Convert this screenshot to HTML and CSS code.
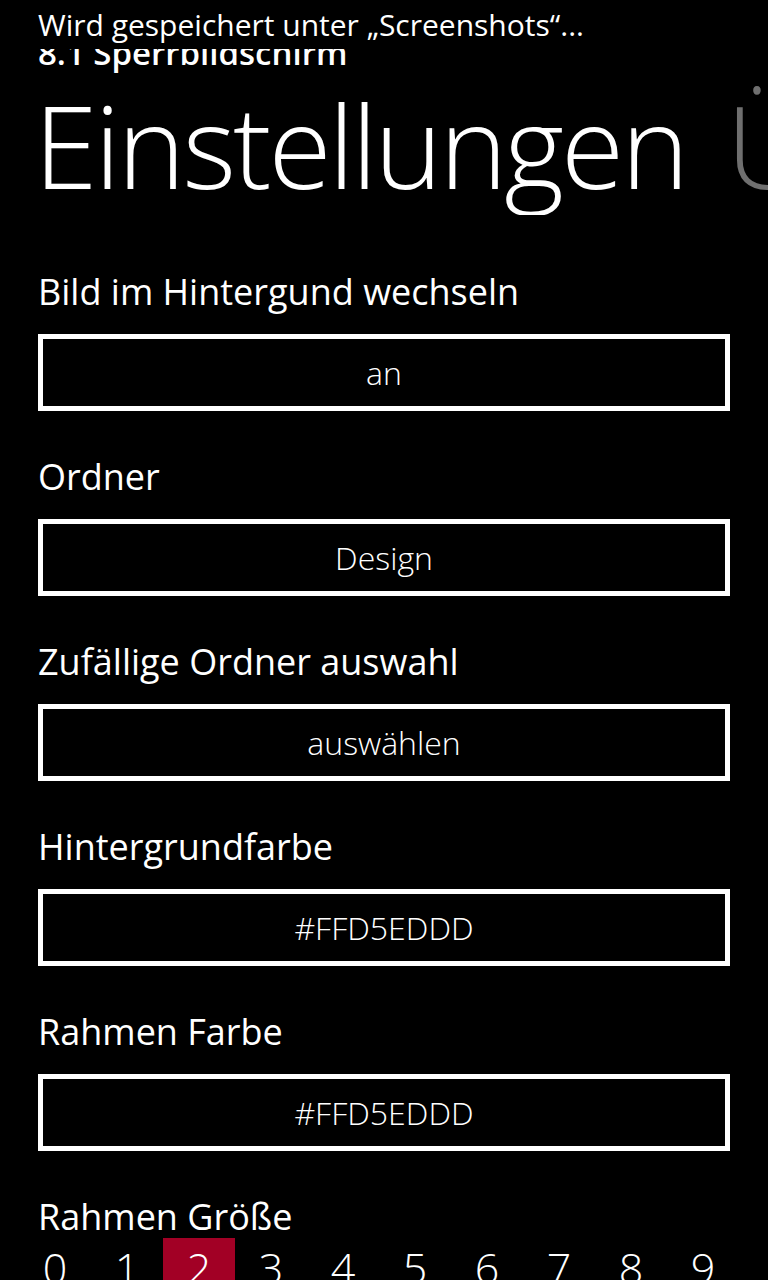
FILE: index.html
```html
<!DOCTYPE html>
<html lang="de">
<head>
<meta charset="utf-8">
<title>8.1 Sperrbildschirm</title>
<link rel="stylesheet" href="styles.css">
</head>
<body>
<div class="phone">
  <div class="status">Wird gespeichert unter „Screenshots“...</div>
  <div class="app-title">8.1 Sperrbildschirm</div>
  <div class="pivot">
    <span class="pivot-item active">Einstellungen</span>
    <span class="pivot-item">Über</span>
  </div>
  <div class="settings">
    <div class="setting">
      <div class="label">Bild im Hintergund wechseln</div>
      <div class="button">an</div>
    </div>
    <div class="setting">
      <div class="label">Ordner</div>
      <div class="button">Design</div>
    </div>
    <div class="setting">
      <div class="label">Zufällige Ordner auswahl</div>
      <div class="button">auswählen</div>
    </div>
    <div class="setting">
      <div class="label">Hintergrundfarbe</div>
      <div class="button">#FFD5EDDD</div>
    </div>
    <div class="setting">
      <div class="label">Rahmen Farbe</div>
      <div class="button">#FFD5EDDD</div>
    </div>
    <div class="setting last">
      <div class="label">Rahmen Größe</div>
      <div class="sizes">
        <span class="size">0</span>
        <span class="size">1</span>
        <span class="size selected">2</span>
        <span class="size">3</span>
        <span class="size">4</span>
        <span class="size">5</span>
        <span class="size">6</span>
        <span class="size">7</span>
        <span class="size">8</span>
        <span class="size">9</span>
      </div>
    </div>
  </div>
</div>
</body>
</html>
```

FILE: styles.css
```css
html, body {
  margin: 0;
  padding: 0;
  background: #000;
  color: #fff;
  font-family: "Open Sans", "Noto Sans", sans-serif;
}

.phone {
  position: relative;
  width: 768px;
  height: 1280px;
  overflow: hidden;
  display: flex;
  flex-direction: column;
}

.phone > * {
  flex-shrink: 0;
}

.status {
  position: absolute;
  left: 0;
  top: 0;
  right: 0;
  height: 49px;
  background: #000;
  box-sizing: border-box;
  padding: 7px 0 0 38px;
  font-size: 30px;
  line-height: 36px;
  font-weight: 400;
  white-space: nowrap;
  z-index: 2;
}

.app-title {
  margin-top: 35px;
  padding-left: 38px;
  font-size: 33px;
  line-height: 36px;
  font-weight: 600;
  white-space: nowrap;
}

.pivot {
  margin-top: 4px;
  display: flex;
  gap: 40px;
  padding-left: 34px;
  white-space: nowrap;
  overflow: hidden;
}

.pivot-item {
  flex-shrink: 0;
  font-size: 115px;
  line-height: 140px;
  font-weight: 300;
  letter-spacing: -3px;
  color: #fff;
}

.pivot-item:not(.active) {
  color: #6f6f6f;
}

.settings {
  margin-top: 53px;
  display: flex;
  flex-direction: column;
  gap: 42px;
  padding: 0 38px;
}

.setting {
  flex-shrink: 0;
  display: flex;
  flex-direction: column;
  gap: 18px;
}

.label {
  font-size: 36px;
  line-height: 48px;
  font-weight: 400;
  white-space: nowrap;
}

.button {
  height: 77px;
  flex-shrink: 0;
  box-sizing: border-box;
  border: 5px solid #fff;
  display: flex;
  align-items: center;
  justify-content: center;
  font-size: 32px;
  font-weight: 300;
}

.setting.last {
  gap: 0;
}

.sizes {
  display: flex;
  margin-left: -19px;
  margin-top: -3px;
}

.size {
  flex-shrink: 0;
  width: 72px;
  height: 72px;
  display: flex;
  align-items: flex-start;
  justify-content: center;
  font-size: 43px;
  line-height: 43px;
  font-weight: 300;
  padding-top: 8px;
  box-sizing: border-box;
}

.size.selected {
  background: #a20025;
}
```
